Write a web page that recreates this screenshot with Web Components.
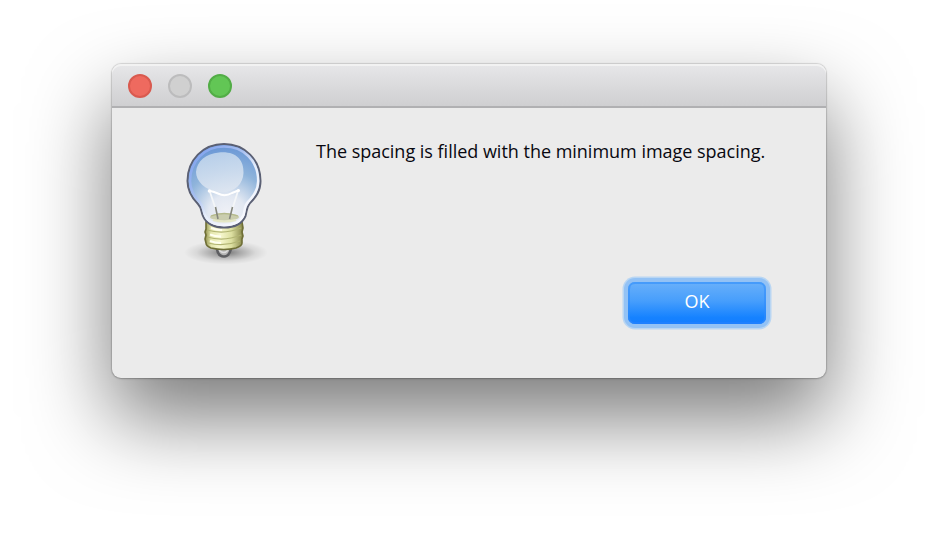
<!DOCTYPE html>
<html lang="en"><head><meta charset="utf-8"><title>Message</title>
<style>
html,body{margin:0;background:#fff;height:538px;overflow:hidden}
body{box-sizing:border-box;padding:64px 112px 0}
</style></head><body>
<app-dialog>
  <title-bar slot="title"></title-bar>
  <bulb-icon slot="icon"></bulb-icon>
  <span slot="message">The spacing is filled with the minimum image spacing.</span>
  <push-button slot="action">OK</push-button>
</app-dialog>
<script>
const define=(name,html)=>customElements.define(name,class extends HTMLElement{
  constructor(){super();this.attachShadow({mode:'open'}).innerHTML=html;}
});
define('title-bar',`<style>
:host{display:flex;align-items:center;gap:16px;box-sizing:border-box;height:44px;padding:1px 16px 0;background:linear-gradient(#e7e7e9,#cfcfd1);border-bottom:2px solid #b0b0b2;box-shadow:inset 0 2px #f2f2f2;border-radius:9px 9px 0 0}
i{box-sizing:border-box;width:24px;height:24px;border-radius:50%;border:2px solid}
.c{background:#ee6a5f;border-color:#d95a4f}.m{background:#d0d0d0;border-color:#bcbcbd}.z{background:#62c655;border-color:#52ad46}
</style><i class="c"></i><i class="m"></i><i class="z"></i>`);
define('push-button',`<style>
:host{display:block}
button{display:block;box-sizing:border-box;width:138px;height:42px;margin:0;padding:0 0 3px;border:0;border-radius:7px;color:#fff;font:18px/39px "Open Sans","Noto Sans",sans-serif;background:linear-gradient(#69b0fa,#479efc 45%,#1582ff 85%,#147dff);box-shadow:inset 0 2px #459bfb,inset 2px 0 #2f8afb88,inset -2px 0 #2f8afb88,inset 0 -2px #1e80ff,0 0 0 4px #93c2f5,0 0 0 5.5px #b9d6f3}
</style><button><slot></slot></button>`);
define('bulb-icon',`<style>:host{display:block}svg{display:block}</style>
<svg width="110" height="140" viewBox="170 130 110 140" fill="none">
<defs>
<radialGradient id="sh"><stop stop-color="#000" stop-opacity=".5"/><stop offset=".35" stop-color="#000" stop-opacity=".27"/><stop offset=".7" stop-color="#000" stop-opacity=".08"/><stop offset="1" stop-color="#000" stop-opacity="0"/></radialGradient>
<radialGradient id="gl" cx="227" cy="214" r="67" gradientUnits="userSpaceOnUse"><stop stop-color="#f0f1f6"/><stop offset=".28" stop-color="#e2e8f2"/><stop offset=".65" stop-color="#8fb4db"/><stop offset="1" stop-color="#6b98d6"/></radialGradient>
<linearGradient id="hi" x1="215" y1="152" x2="225" y2="196" gradientUnits="userSpaceOnUse"><stop stop-color="#bdd3eb"/><stop offset="1" stop-color="#e0e7f1"/></linearGradient>
<linearGradient id="br" x1="205" x2="243" y1="0" y2="0" gradientUnits="userSpaceOnUse"><stop stop-color="#8d8d48"/><stop offset=".16" stop-color="#e4e6ac"/><stop offset=".4" stop-color="#f7f8cf"/><stop offset=".7" stop-color="#dcdfa0"/><stop offset="1" stop-color="#86864a"/></linearGradient>
<linearGradient id="rim" x1="193" y1="150" x2="253" y2="210" gradientUnits="userSpaceOnUse"><stop stop-color="#7c9fee"/><stop offset=".42" stop-color="#a9c0f0"/><stop offset=".65" stop-color="#e6edfa"/><stop offset="1" stop-color="#f8f9fe"/></linearGradient>
</defs>
<ellipse cx="226" cy="252.500" rx="42" ry="12" fill="url(#sh)"/>
<path d="M217 249Q218 256.500 224 256.500Q229 256.500 231 249" stroke="#5d5e61" stroke-width="2.600" fill="#b5b5b5"/>
<path d="M219 250Q224 255 228 250" stroke="#ddd" stroke-width="1.500"/>
<path d="M206 222V229L205 232L206 235L205 239L206 243Q206 246 211 248Q224 251 236 248Q242 246 242 243V239L243 236L242 232L243 228L242 222Z" fill="url(#br)" stroke="#6f6f36" stroke-width="1.600"/>
<path d="M207 230Q224 235 241 228M207 237Q224 242 241 235M208 243Q224 247 240 241" stroke="#b2b573" stroke-width="1.200"/>
<path d="M211 228Q216 230 222 230M210 234.500Q215 236.500 221 236.500M210 241Q215 243 221 243" stroke="#fffff0" stroke-width="2"/>
<path d="M224 144C203 144 187.500 160 187.500 181C187.500 192 193 199 198 204C202 208 201 212 203 216C206 224 215 227.500 224 227.500C234 227.500 242 224 245.500 216C247 211 246 208 250 203C256 197 260.500 191 260.500 181C260.500 160 245 144 224 144Z" fill="url(#gl)" stroke="#5b6074" stroke-width="2"/>
<path d="M224 146.500C204.500 146.500 190 161 190 181C190 191 195 197.500 200 202.500C204 207 203 211 205 215C208 222 216 225 224 225C233 225 240.500 222 243.500 215C245 210.500 244 206 248 202C254 196 258.200 190 258.200 181C258.200 161 244 146.500 224 146.500Z" stroke="url(#rim)" stroke-width="2.500"/>
<path d="M219 152.500C236 151 244 160 243.500 173C243 185 233 194 218 192C205 190 196 181 196 172C197 161 206 153.500 219 152.500Z" fill="url(#hi)" opacity=".92"/>
<ellipse cx="224.500" cy="217" rx="14.500" ry="3.800" fill="#cacdae"/>
<path d="M211 216Q224 211 238 216" stroke="#b4b98b" stroke-width="1.300"/>
<path d="M213 220Q224 223 236 220" stroke="#e5e8c5" stroke-width="2"/>
<path d="M210 192L216 210M238 191L232 210" stroke="#f4f6f8" stroke-width="1.800"/>
<path d="M208.500 190.500Q215 192 218 193.500Q225 197 232 193Q235 192 239 190" stroke="#fff" stroke-width="2"/>
<circle cx="209.500" cy="191" r="1.800" fill="#fff"/><circle cx="238.500" cy="190.500" r="1.500" fill="#fff"/>
<path d="M215.500 207L218 219M232.500 207L229.500 219" stroke="#85877d" stroke-width="1.600"/>
</svg>`);
define('app-dialog',`<style>
:host{display:block;box-sizing:border-box;width:714px;height:314px;background:#ebebeb;border-radius:9px;font:18px/24px "Open Sans","Noto Sans",sans-serif;color:#080810;box-shadow:0 0 1px 1px rgba(0,0,0,.13),0 1px 2px rgba(0,0,0,.15),0 39px 82px 1px rgba(0,0,0,.52)}
main{display:grid;grid-template-columns:110px 450px;column-gap:36px;padding:22px 0 0 58px}
.right{display:flex;flex-direction:column;justify-content:space-between;height:194px;padding-top:9px;box-sizing:border-box}
.message{white-space:nowrap;letter-spacing:-.015px}.actions{display:flex;justify-content:flex-end}
</style><slot name="title"></slot><main><slot name="icon"></slot><div class="right"><div class="message"><slot name="message"></slot></div><div class="actions"><slot name="action"></slot></div></div></main>`);
</script></body></html>
